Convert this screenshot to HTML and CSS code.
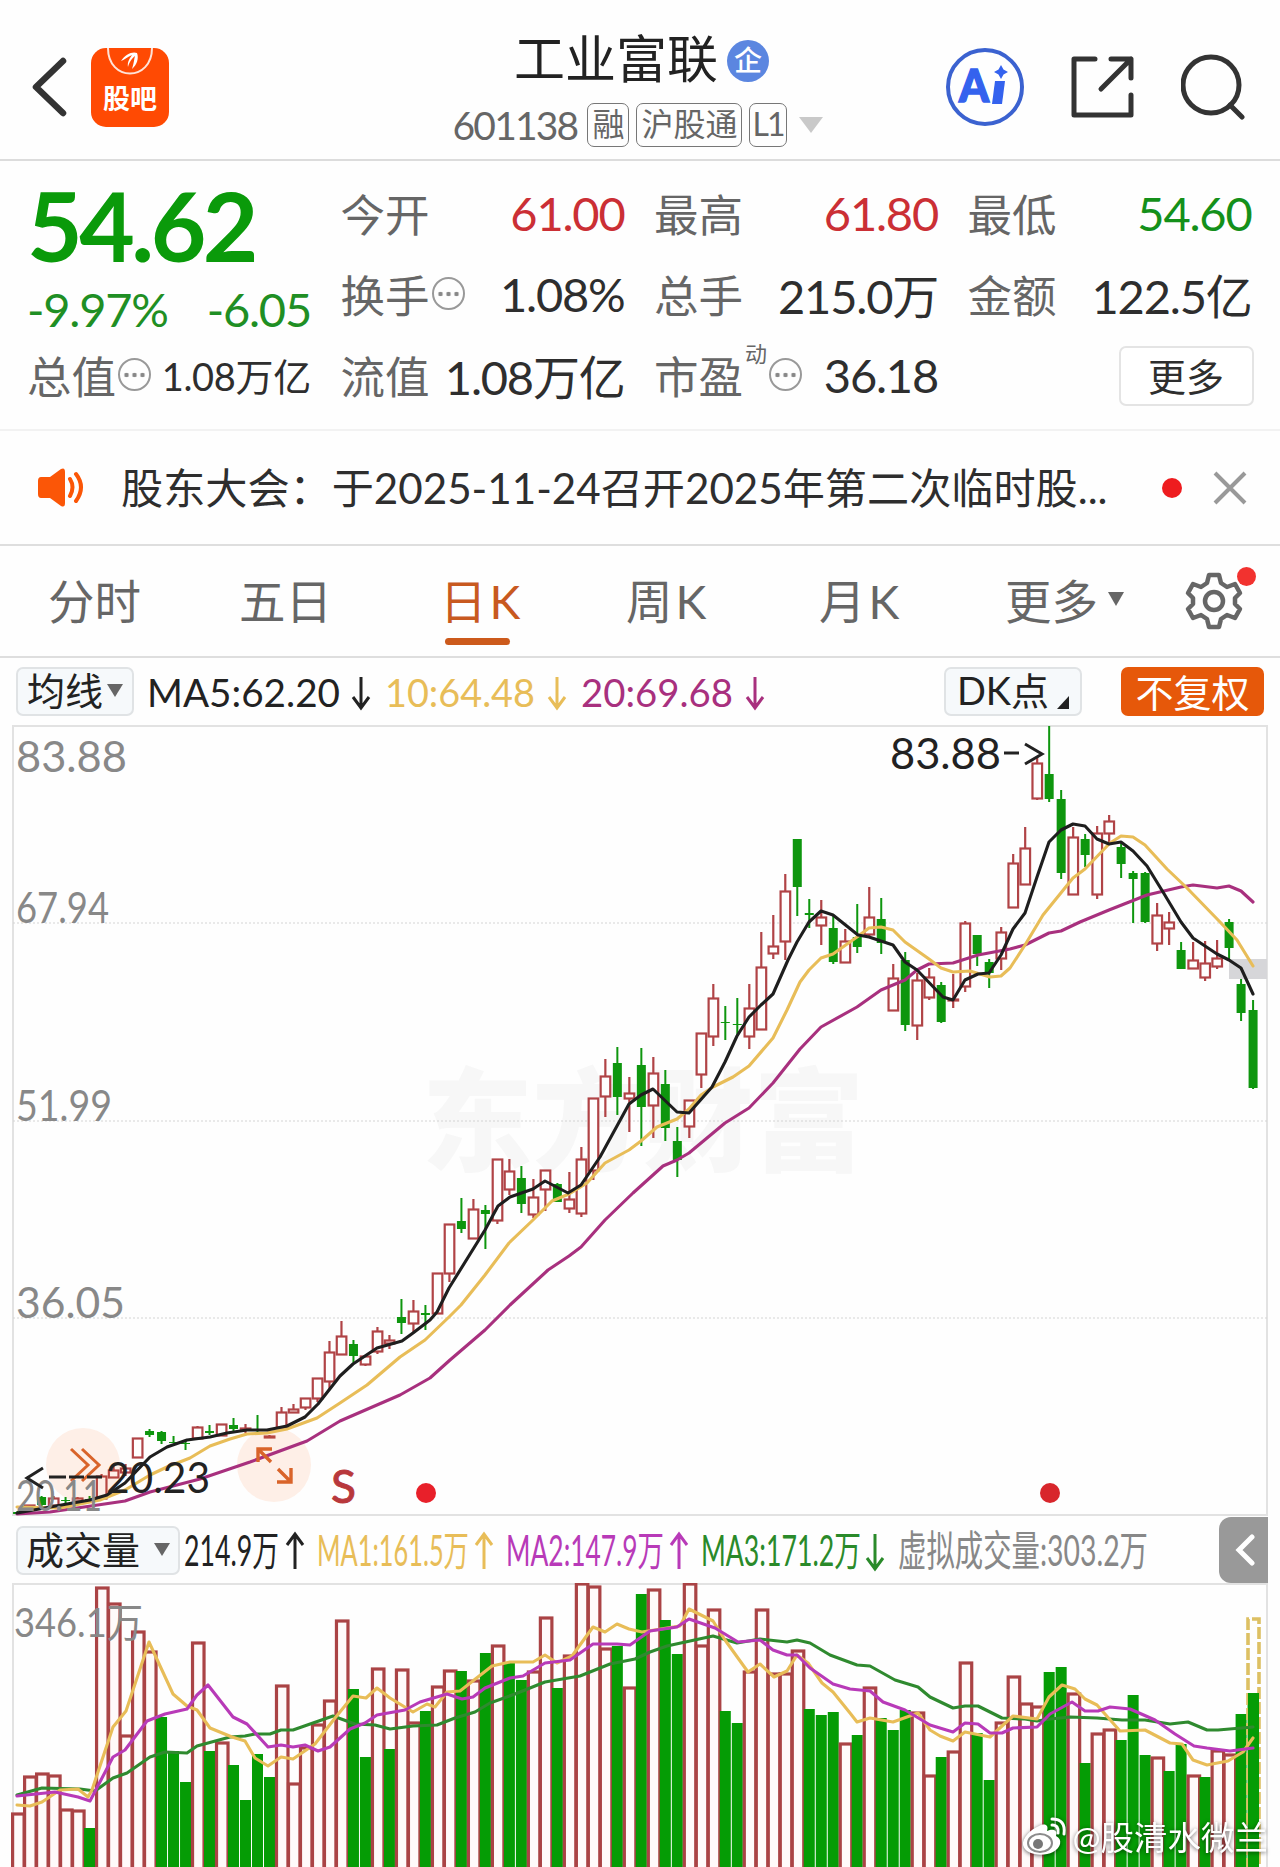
FILE: index.html
```html
<!DOCTYPE html>
<html lang="zh-CN">
<head>
    <meta charset="UTF-8">
    <meta name="viewport" content="width=device-width, initial-scale=1.0">
    <title>工业富联 601138</title>
    <link rel="stylesheet" href="styles.css">
</head>
<body>
    <header class="header">
        <div class="header-left">
            <svg class="back" width="36" height="60" viewBox="0 0 36 60"><path d="M32 4 L5 30 L32 56" fill="none" stroke="#333" stroke-width="6.5" stroke-linecap="round" stroke-linejoin="round"/></svg>
            <div class="app-icon">
                <svg width="78" height="33" viewBox="0 0 78 33">
                    <path d="M17 0 C17 34 61 34 61 0" fill="none" stroke="#ffe3d8" stroke-width="2"/>
                    <path d="M30 13 C34 6 42 3 46 5 C48 10 46 17 41 21 C43 15 43 11 44 8 C39 12 38 16 37 19 C36 14 39 10 41 7 C36 9 33 12 30 13Z" fill="#fff"/>
                </svg>
                <span>股吧</span>
            </div>
        </div>
        <div class="header-title">
            <div class="name">工业富联<span class="badge">企</span></div>
            <div class="code">
                <span class="num">601138</span>
                <span class="tag">融</span>
                <span class="tag">沪股通</span>
                <span class="tag level">L1</span>
                <svg width="24" height="16" viewBox="0 0 24 16"><path d="M0 0H24L12 16Z" fill="#c9c9c9"/></svg>
            </div>
        </div>
        <div class="header-right">
            <svg width="80" height="80" viewBox="0 0 80 80">
                <circle cx="40" cy="40" r="37" fill="none" stroke="#3b62d0" stroke-width="4"/>
                <text class="ai-text" x="14" y="55" textLength="30" lengthAdjust="spacingAndGlyphs">A</text>
                <path d="M50 34H60L57 57H47Z" fill="#3462ee"/>
                <path d="M56 18 L58.500 22.500 L63 25 L58.500 27.500 L56 32 L53.500 27.500 L49 25 L53.500 22.500Z" fill="#3462ee"/>
            </svg>
            <svg width="64" height="64" viewBox="0 0 64 64" fill="none" stroke="#333" stroke-width="5" stroke-linecap="round" stroke-linejoin="round">
                <path d="M24 4H3V60H60V40"/><path d="M40 4H60V23M60 4L30 34"/>
            </svg>
            <svg width="66" height="66" viewBox="0 0 66 66" fill="none" stroke="#333" stroke-width="5" stroke-linecap="round">
                <circle cx="30" cy="31" r="28"/><path d="M49 51L61 63"/>
            </svg>
        </div>
    </header>

    <section class="quote">
        <div class="price-box">
            <div class="price">54.62</div>
            <div class="change"><span>-9.97%</span><span>-6.05</span></div>
        </div>
        <div class="cell"><label>今开</label><b class="red">61.00</b></div>
        <div class="cell"><label>最高</label><b class="red">61.80</b></div>
        <div class="cell"><label>最低</label><b class="green">54.60</b></div>
        <div class="cell"><label>换手</label><i class="info"></i><b>1.08%</b></div>
        <div class="cell"><label>总手</label><b>215.0万</b></div>
        <div class="cell"><label>金额</label><b>122.5亿</b></div>
        <div class="cell"><label>总值</label><i class="info"></i><b class="small">1.08万亿</b></div>
        <div class="cell"><label>流值</label><b>1.08万亿</b></div>
        <div class="cell"><label>市盈</label><sup>动</sup><i class="info"></i><b>36.18</b></div>
        <div class="cell"><button class="more">更多</button></div>
    </section>

    <section class="news">
        <svg width="50" height="42" viewBox="0 0 50 42">
            <path d="M4 10H13L24 2Q28 0 28 5V36Q28 41 24 39L13 31H4Q1 31 1 27V14Q1 10 4 10Z" fill="#fb5607"/>
            <path d="M33 12Q38 20 33 29M39 7Q49 20 39 34" fill="none" stroke="#fb5607" stroke-width="4" stroke-linecap="round"/>
        </svg>
        <p>股东大会：于2025-11-24召开2025年第二次临时股...</p>
        <span class="dot"></span>
        <svg width="34" height="34" viewBox="0 0 34 34"><path d="M2 2L32 32M32 2L2 32" stroke="#999" stroke-width="4"/></svg>
    </section>

    <nav class="tabs">
        <span>分时</span>
        <span>五日</span>
        <span class="k active">日K</span>
        <span class="k">周K</span>
        <span class="k">月K</span>
        <span class="tab-more">更多<i></i></span>
        <div class="settings">
            <svg width="58" height="58" viewBox="0 0 58 58" fill="none" stroke="#666" stroke-width="4.5" stroke-linejoin="round">
                <path d="M24 3H34L36 11L42 15L50 12L55 21L50 26V32L55 37L50 46L42 43L36 47L34 55H24L22 47L16 43L8 46L3 37L8 32V26L3 21L8 12L16 15L22 11Z"/>
                <circle cx="29" cy="29" r="9"/>
            </svg>
            <span class="dot"></span>
        </div>
    </nav>

    <section class="legend">
        <button class="pick ma-pick">均线<i></i></button>
        <svg class="legend-text" width="640" height="60" viewBox="140 662 640 60" id="maLegend"></svg>
        <button class="pick dk">DK点<i></i></button>
        <button class="adjust">不复权</button>
    </section>

    <svg class="chart" id="priceChart" width="1280" height="792" viewBox="0 725 1280 792"></svg>

    <section class="legend vol-legend">
        <button class="pick vol-pick">成交量<i></i></button>
        <svg class="legend-text" width="980" height="66" viewBox="180 1517 980 66" id="volLegend"></svg>
        <button class="collapse"><svg width="20" height="32" viewBox="0 0 20 32"><path d="M17 3L4 16L17 29" fill="none" stroke="#fff" stroke-width="5" stroke-linecap="round"/></svg></button>
    </section>

    <div class="volume">
        <svg class="chart" id="volChart" width="1280" height="284" viewBox="0 1583 1280 284"></svg>
        <div class="author">
            <svg width="46" height="40" viewBox="0 0 46 40">
                <path d="M18 9C24 6 28 8 26 14C33 11 37 14 35 19C42 22 40 31 32 35C22 40 4 38 2 28C1 21 10 12 18 9Z" fill="#fff"/>
                <ellipse cx="19" cy="26" rx="12" ry="9" fill="none" stroke="#8b8b8b" stroke-width="2"/>
                <circle cx="17" cy="27" r="5" fill="#777"/>
                <path d="M31 8Q38 8 37 16M31 2Q45 2 43 17" fill="none" stroke="#fff" stroke-width="3" stroke-linecap="round"/>
            </svg>
            <span>@股清水微兰</span>
        </div>
    </div>

    <script src="chart.js"></script>
</body>
</html>
```
FILE: styles.css
```css
* {
    box-sizing: border-box;
}
body {
    margin: 0;
    width: 1280px;
    height: 1867px;
    overflow: hidden;
    background: #fefefe;
    color: #2e2e2e;
    font-family: Lato, "Noto Sans CJK SC", sans-serif;
}
button {
    font-family: inherit;
    padding: 0;
    margin: 0;
    color: inherit;
}
svg {
    display: block;
    flex: none;
}

/* header */
.header {
    height: 161px;
    border-bottom: 2px solid #dcdcdc;
    display: grid;
    grid-template-columns: 400px 1fr 400px;
}
.header-left {
    display: flex;
    align-items: center;
    padding: 15px 0 0 31px;
    gap: 24px;
}
.app-icon {
    width: 78px;
    height: 79px;
    border-radius: 15px;
    background: #ff4a03;
    color: #fff;
    text-align: center;
    font-size: 27px;
    font-weight: 700;
    line-height: 36px;
}
.header-title {
    display: flex;
    flex-direction: column;
    align-items: center;
    padding-top: 31px;
}
.name {
    display: flex;
    align-items: center;
    height: 60px;
    margin-left: 3px;
    font-size: 51px;
    line-height: 54px;
    padding-bottom: 4px;
    color: #222;
}
.badge {
    width: 42px;
    height: 42px;
    margin: 4px 0 0 9px;
    border-radius: 50%;
    background: #5b86e0;
    color: #fff;
    font-size: 28px;
    font-weight: 500;
    line-height: 40px;
    text-align: center;
}
.code {
    display: flex;
    align-items: center;
    gap: 7px;
    height: 44px;
    margin-top: 12px;
    margin-left: -4px;
    color: #666;
    font-size: 39px;
}
.code .num {
    letter-spacing: -1.8px;
    margin-right: 3px;
}
.code svg {
    margin-left: 5px;
}
.tag {
    height: 44px;
    padding: 0 4px;
    border: 1.5px solid #777;
    border-radius: 7px;
    font-size: 32px;
    line-height: 40px;
}
.tag.level {
    padding: 0 3px 0 2px;
    letter-spacing: -2px;
}
.header-right {
    display: flex;
    align-items: center;
    padding: 15px 0 0 65px;
    gap: 46px;
}
.ai-text {
    font-family: Lato, sans-serif;
    font-weight: 900;
    font-size: 46px;
    fill: #3462ee;
    stroke: #3462ee;
    stroke-width: 1.5;
}

/* quote numbers */
.quote {
    display: grid;
    grid-template-columns: 284px 284px 284px 284px;
    grid-template-rows: 81px 81px 81px;
    column-gap: 29.5px;
    height: 270px;
    padding: 11px 0 0 27px;
    border-bottom: 2px solid #f2f2f2;
}
.price-box {
    grid-row: 1 / 3;
    color: #0a9a0a;
}
.price {
    height: 101px;
    font-size: 96px;
    font-weight: 700;
    line-height: 106px;
    letter-spacing: -3.5px;
}
.change {
    display: flex;
    justify-content: space-between;
    font-size: 47px;
    line-height: 72px;
    letter-spacing: -1.2px;
    color: #1f8f24;
}
.cell {
    display: flex;
    align-items: center;
}
.cell label {
    font-size: 44.5px;
    color: #666;
}
.cell b {
    margin-left: auto;
    font-size: 47px;
    font-weight: 400;
    letter-spacing: -1.2px;
    white-space: nowrap;
}
.cell b.small {
    font-size: 38px;
    letter-spacing: -0.3px;
}
.cell sup {
    font-size: 22px;
    color: #666;
    align-self: flex-start;
    margin: 3px 0 0 2px;
    line-height: 34px;
}
.red {
    color: #cb2f35;
}
.green {
    color: #14901a;
}
.info {
    width: 33px;
    height: 33px;
    margin: 0 0 0 2px;
    border: 2.5px solid #999;
    border-radius: 50%;
    background: radial-gradient(circle, #888 2px, transparent 2.6px) center / 8px 8px repeat-x;
    background-clip: content-box;
    padding: 0 2px;
    flex: none;
}
.more {
    width: 135px;
    height: 60px;
    margin: 2px -2px 0 auto;
    border: 2px solid #e4e4e4;
    border-radius: 7px;
    background: #fff;
    font-size: 38px;
    line-height: 48px;
}

/* news */
.news {
    display: flex;
    align-items: center;
    height: 115px;
    padding: 0 33px 0 37px;
    border-bottom: 2px solid #dedede;
}
.news p {
    margin: -5px auto 0 34px;
    font-size: 42.15px;
    white-space: nowrap;
}
.dot {
    width: 20px;
    height: 20px;
    border-radius: 50%;
    background: #ee1c1f;
}
.news svg:last-child {
    margin-left: 31px;
}

/* tabs */
.tabs {
    display: grid;
    grid-template-columns: 191px 201px 186px 193px 186px 180px auto;
    align-items: center;
    justify-items: start;
    height: 112px;
    padding-left: 48px;
    border-bottom: 2px solid #dedede;
    font-size: 46.5px;
    color: #666;
}
.tabs > span {
    margin-top: -5px;
}
.tabs .k {
    letter-spacing: 3px;
}
.tabs .active {
    position: relative;
    color: #c8591f;
}
.active::after {
    content: "";
    position: absolute;
    left: 5px;
    bottom: -13px;
    width: 65px;
    height: 7px;
    border-radius: 4px;
    background: #cc5a1c;
}
.tab-more {
    display: flex;
    align-items: center;
}
.tab-more i {
    margin-left: 10px;
    border: 8px solid transparent;
    border-top: 14px solid #666;
    border-bottom: 0;
}
.settings {
    position: relative;
}
.settings .dot {
    position: absolute;
    right: -13px;
    top: -5px;
    width: 19px;
    height: 19px;
    background: #f2322f;
}

/* legends */
.legend {
    display: flex;
    align-items: center;
    height: 67px;
    padding-left: 16px;
}
.pick {
    display: flex;
    align-items: center;
    justify-content: center;
    height: 49px;
    padding-bottom: 2px;
    border: 2px solid #e0e3e5;
    border-radius: 7px;
    background: #f6f9fb;
    font-size: 38px;
    line-height: 43px;
    color: #222;
}
.pick i {
    margin-left: 4px;
    border: 8px solid transparent;
    border-top: 13px solid #666;
    border-bottom: 0;
}
.ma-pick {
    width: 118px;
}
.dk {
    width: 138px;
    margin-left: 164px;
}
.legend .legend-text {
    margin-left: 6px;
}
.dk i {
    margin: 24px 0 0 8px;
    border: 0 solid transparent;
    border-left: 12px solid transparent;
    border-bottom: 13px solid #222;
}
.adjust {
    width: 143px;
    height: 49px;
    margin-left: 39px;
    border: 0;
    border-radius: 7px;
    background: #e6580a;
    color: #fff;
    font-size: 38px;
    line-height: 44px;
}
.vol-legend {
    height: 66px;
}
.vol-pick {
    width: 164px;
}
.vol-pick i {
    margin-left: 14px;
}
.vol-legend .legend-text {
    margin-left: 0;
}
.collapse {
    display: flex;
    align-items: center;
    width: 49px;
    height: 66px;
    margin-left: auto;
    margin-right: 12px;
    padding-left: 16px;
    border: 0;
    border-radius: 12px 0 0 12px;
    background: #999;
}

/* charts */
.chart text {
    white-space: pre;
}
.frame {
    fill: none;
    stroke: #e2e2e2;
    stroke-width: 2;
}
.grid {
    stroke: #d4d4d4;
    stroke-width: 1.2;
    stroke-dasharray: 2 2;
}
.line {
    fill: none;
    stroke-width: 3.1;
    stroke-linejoin: round;
    stroke-linecap: round;
}
.up {
    fill: #fefefe;
    stroke: #b04346;
    stroke-width: 2.2;
}
.down {
    fill: #0e960e;
}
.vol-up {
    fill: #fffafa;
    stroke: #aa4345;
    stroke-width: 3.2;
}
.vol-down {
    fill: #059c05;
}
.brand {
    font-family: "Noto Sans CJK SC", sans-serif;
    font-weight: 900;
}
.volume {
    position: relative;
}
.author {
    position: absolute;
    right: 12px;
    bottom: 7px;
    display: flex;
    align-items: center;
    gap: 5px;
    color: #fff;
    font-size: 33.5px;
    line-height: 46px;
    white-space: nowrap;
    filter: drop-shadow(0 1px 2px rgba(0, 0, 0, 0.6));
}
```
FILE: chart.js
```js
const X0 = 17.6;
const STEP = 11.995;
const YELLOW = '#e8bd58';
const PURPLE = '#a8307e';

// [direction, high, body top, body bottom, low]
const candles = [
    ['d',1511,1512,1514,1515],['u',1505,1505,1507,1507],['d',1496,1497,1505,1510],['u',1496,1498,1505,1506],
    ['d',1497,1500,1501,1503],['u',1497,1498,1501,1504],['d',1496,1499,1500,1502],['u',1474,1476,1498,1498],
    ['u',1465,1470,1477,1477],['u',1464,1468,1472,1476],['u',1438,1438,1457,1457],['d',1429,1431,1435,1437],
    ['d',1431,1432,1441,1444],['d',1436,1442,1443,1443],['d',1441,1443,1444,1450],['u',1426,1427,1438,1438],
    ['d',1425,1431,1433,1435],['u',1424,1424,1435,1435],['d',1418,1425,1429,1431],['u',1424,1428,1429,1433],
    ['d',1415,1430,1431,1432],['u',1435,1436,1437,1438],['u',1407,1412,1427,1427],['u',1404,1409,1412,1413],
    ['u',1398,1398,1407,1410],['u',1378,1378,1398,1402],['u',1341,1352,1381,1390],['u',1321,1336,1354,1354],
    ['d',1340,1344,1356,1363],['u',1356,1356,1364,1366],['u',1327,1331,1351,1354],['u',1335,1340,1343,1349],
    ['d',1299,1317,1323,1334],['u',1300,1311,1323,1332],['d',1305,1313,1315,1330],['u',1273,1273,1313,1313],
    ['u',1224,1224,1273,1282],['d',1198,1221,1229,1233],['u',1199,1209,1238,1238],['d',1205,1210,1214,1249],
    ['u',1159,1159,1220,1224],['u',1159,1171,1189,1195],['d',1166,1178,1204,1213],['u',1179,1197,1214,1218],
    ['u',1170,1170,1189,1211],['d',1183,1184,1202,1202],['u',1172,1199,1208,1213],['u',1147,1159,1213,1217],
    ['u',1098,1098,1170,1180],['u',1059,1076,1096,1117],['d',1047,1063,1097,1115],['u',1077,1093,1098,1132],
    ['d',1048,1065,1107,1146],['u',1057,1073,1105,1138],['d',1070,1084,1128,1141],['d',1127,1141,1160,1177],
    ['u',1100,1100,1126,1138],['u',1033,1033,1074,1088],['u',984,998,1036,1046],['d',1006,1022,1023,1040],
    ['d',998,1024,1025,1035],['u',984,1008,1036,1049],['u',932,967,1029,1029],['u',915,946,953,959],
    ['u',874,891,941,960],['d',839,839,887,916],['d',899,913,915,928],['u',900,917,925,945],
    ['d',915,928,962,964],['u',929,941,962,962],['d',904,937,947,953],['u',887,917,934,936],
    ['d',898,919,943,954],['u',964,978,1010,1010],['d',952,960,1025,1031],['u',973,980,1025,1040],
    ['u',968,977,997,1000],['d',982,985,1022,1023],['u',974,999,1000,1008],['u',921,923,986,992],
    ['d',935,935,954,966],['d',959,962,973,988],['u',927,932,958,970],['u',854,863,907,907],
    ['u',827,848,884,884],['u',757,763,798,800],['d',726,774,799,802],['d',790,799,873,879],
    ['u',827,837,894,895],['d',834,839,855,867],['u',826,833,894,899],['u',815,821,833,845],
    ['d',842,847,864,878],['d',871,873,879,923],['d',872,873,922,923],['u',903,915,943,951],
    ['u',912,922,928,945],['d',942,950,969,969],['u',942,960,968,968],['u',941,963,977,981],
    ['u',940,958,966,969],['d',919,922,948,960],['d',979,984,1013,1021],['d',1000,1010,1088,1089]
];

const ma5 = '17,1513 67,1504 90,1500 107,1495 125,1483 150,1457 167,1447 187,1440 210,1437 227,1433 247,1430 267,1430 287,1426 305,1417 318,1404 340,1376 353,1364 377,1348 402,1341 413,1333 430,1320 437,1312 449,1288 485,1230 498,1206 510,1197 533,1189 545,1181 568,1193 581,1185 600,1157 629,1104 641,1095 653,1089 677,1112 689,1113 712,1087 725,1062 737,1036 749,1017 761,1005 773,994 788,960 797,942 809,922 821,911 833,915 858,935 869,937 893,945 905,962 917,970 943,997 953,1000 965,980 978,974 989,973 1001,955 1013,929 1025,913 1037,877 1049,842 1061,830 1073,824 1085,826 1097,839 1109,844 1121,842 1133,851 1147,866 1163,892 1181,922 1193,938 1217,954 1229,960 1241,968 1253,994';
const ma10 = '17,1507 60,1508 80,1504 100,1500 125,1490 150,1475 167,1467 190,1458 210,1446 230,1439 247,1434 267,1433 287,1429 317,1418 340,1403 367,1385 400,1357 425,1340 449,1317 461,1305 485,1275 509,1243 533,1220 552,1201 569,1194 587,1183 605,1163 629,1150 641,1141 657,1127 677,1119 689,1109 701,1095 713,1087 733,1077 749,1066 773,1038 787,1010 800,982 809,970 821,958 833,954 857,937 869,928 881,927 893,930 905,942 929,959 941,968 953,972 970,971 990,977 1001,976 1010,968 1025,945 1043,915 1073,878 1085,869 1110,843 1121,836 1133,837 1145,845 1167,869 1187,888 1220,922 1237,940 1253,966';
const ma20 = '17,1514 50,1512 125,1501 150,1492 200,1479 250,1462 307,1441 340,1421 400,1395 430,1378 450,1360 485,1330 510,1305 548,1270 569,1256 581,1247 605,1220 633,1193 663,1166 677,1160 689,1153 725,1123 749,1108 773,1083 800,1049 821,1027 857,1007 881,990 905,980 917,970 929,964 953,963 978,955 1010,949 1025,945 1049,933 1061,931 1080,922 1109,910 1147,895 1181,887 1193,885 1217,888 1229,886 1241,891 1253,902';

// top edge of every volume bar
const volumes = [
    1813,1776,1773,1775,1809,1810,1828,1587,1603,1735,1631,1651,1717,1751,1782,1642,1751,1742,1765,1800,
    1754,1777,1685,1783,1747,1724,1700,1620,1689,1757,1668,1749,1669,1722,1711,1686,1670,1671,1680,1653,
    1645,1663,1680,1671,1617,1688,1655,1583,1586,1648,1646,1687,1594,1589,1620,1654,1583,1645,1609,1711,
    1723,1671,1609,1673,1673,1650,1709,1715,1712,1743,1735,1687,1718,1730,1710,1712,1775,1757,1751,1662,
    1733,1780,1722,1676,1703,1706,1672,1667,1693,1763,1733,1729,1740,1695,1755,1757,1771,1744,1775,1777,
    1750,1754,1714,1693
];
const volDown = [6,12,13,14,16,18,19,20,21,28,29,31,34,37,39,41,42,45,50,52,54,55,59,60,66,67,68,70,72,73,74,77,80,81,86,87,89,92,93,94,96,97,99,102,103];

const vma1 = '17,1805 30,1806 42,1802 60,1790 78,1789 88,1797 92,1790 100,1766 113,1727 126,1711 149,1642 173,1694 187,1706 197,1710 210,1728 232,1737 245,1741 255,1758 268,1766 281,1757 293,1759 315,1744 335,1718 353,1696 366,1698 377,1688 390,1698 413,1712 427,1704 435,1707 447,1692 460,1691 492,1666 510,1662 533,1662 545,1655 557,1663 572,1656 593,1627 605,1632 617,1624 629,1629 642,1632 667,1628 680,1626 689,1609 713,1621 725,1640 748,1672 760,1664 774,1677 787,1671 797,1655 808,1663 822,1683 833,1692 850,1713 857,1722 870,1718 893,1722 918,1713 930,1730 940,1736 953,1741 965,1732 990,1737 1013,1716 1037,1719 1049,1697 1062,1685 1075,1689 1085,1699 1097,1705 1120,1731 1145,1730 1170,1743 1182,1744 1193,1760 1207,1765 1228,1761 1243,1752 1253,1738';
const vma2 = '17,1796 55,1792 78,1797 90,1801 113,1757 125,1750 147,1721 165,1714 187,1709 197,1695 208,1685 233,1717 247,1724 268,1747 281,1745 293,1747 305,1745 318,1751 330,1747 350,1729 365,1723 377,1715 405,1710 420,1702 447,1694 462,1699 473,1697 485,1688 510,1678 523,1676 545,1663 570,1660 593,1644 617,1644 630,1645 650,1631 677,1627 689,1619 715,1628 738,1642 760,1640 773,1650 787,1655 797,1655 810,1668 833,1684 850,1689 870,1691 883,1702 905,1710 930,1725 953,1732 965,1723 978,1724 990,1733 1002,1733 1013,1728 1037,1727 1050,1714 1072,1702 1085,1711 1098,1711 1110,1707 1130,1709 1155,1720 1175,1734 1194,1746 1207,1748 1230,1751 1253,1748';
const vma3 = '17,1795 42,1788 80,1789 95,1791 113,1778 127,1773 150,1757 165,1752 187,1753 197,1746 230,1737 245,1736 255,1734 270,1734 281,1730 293,1730 313,1723 333,1716 355,1724 375,1725 390,1729 413,1726 437,1725 455,1718 475,1712 490,1703 515,1694 545,1682 580,1676 610,1664 635,1659 650,1652 667,1646 690,1641 713,1636 737,1643 760,1639 787,1642 797,1640 810,1643 830,1655 857,1665 870,1666 895,1680 918,1687 930,1697 953,1708 965,1706 978,1706 1002,1718 1025,1719 1037,1721 1050,1719 1070,1717 1097,1718 1122,1720 1145,1720 1170,1724 1188,1722 1207,1730 1218,1730 1253,1727';

// text squeezed into a given width
function text(str, x, y, width, size, fill) {
    return `<text x="${x}" y="${y}" font-size="${size}" textLength="${width}" lengthAdjust="spacingAndGlyphs" fill="${fill}">${str}</text>`;
}

function arrow(x, top, bottom, up, color) {
    const tip = up ? top : bottom;
    const back = up ? top + 11 : bottom - 11;
    return `<path d="M${x} ${top}V${bottom}M${x - 8} ${back}L${x} ${tip}L${x + 8} ${back}" fill="none" stroke="${color}" stroke-width="3"/>`;
}

function line(points, color) {
    return `<polyline class="line" points="${points}" stroke="${color}"/>`;
}

function drawPrice() {
    let s = text('东方财富', 422, 1163, 442, 112, '#f7f7f7').replace('<text', '<text class="brand"');
    s += '<rect class="frame" x="13" y="726" width="1254" height="789"/>';
    [923, 1121, 1318].forEach(y => { s += `<line class="grid" x1="13" x2="1267" y1="${y}" y2="${y}"/>`; });
    s += '<rect x="1229" y="959" width="38" height="20" fill="#d6d6d9"/>';

    candles.forEach(([dir, high, top, bottom, low], i) => {
        const x = X0 + i * STEP;
        if (dir === 'u') {
            s += `<path class="up" d="M${x} ${high}V${top}M${x} ${bottom}V${low}"/>`;
            s += `<rect class="up" x="${x - 4.7}" y="${top + 0.5}" width="9.6" height="${bottom - top}"/>`;
        } else {
            s += `<rect class="down" x="${x - 1}" y="${high}" width="2" height="${low - high}"/>`;
            s += `<rect class="down" x="${x - 4.5}" y="${top}" width="9" height="${bottom - top}"/>`;
        }
    });

    s += '<circle cx="83" cy="1465" r="37" fill="#ff6a20" fill-opacity=".1"/><circle cx="274" cy="1465" r="37" fill="#ff6a20" fill-opacity=".1"/>';
    s += line(ma20, PURPLE) + line(ma10, YELLOW) + line(ma5, '#1e1e1e');
    s += '<path d="M71 1449L88 1465L71 1481M82 1449L99 1465L82 1481" fill="none" stroke="#d9642a" stroke-width="3"/>';
    s += '<path d="M258 1462V1449H272M258 1449L271 1462M291 1468V1482H277M291 1482L278 1469" fill="none" stroke="#d9642a" stroke-width="3.4"/>';

    [['83.88', 772, 111], ['67.94', 923, 93], ['51.99', 1121, 96], ['36.05', 1318, 109], ['20.11', 1511, 86]].forEach(([t, y, w]) => {
        s += text(t, 16, y, w, 43, '#888');
    });
    s += text('83.88', 890, 769, 111, 42, '#222');
    s += '<path d="M1004 753H1019M1025 744L1042 754L1025 764" fill="none" stroke="#222" stroke-width="3"/>';
    s += text('20.23', 106, 1493, 104, 43, '#222');
    s += '<path d="M43 1468L27 1478L43 1488M49 1477H66M69 1477H84M87 1477H102" fill="none" stroke="#222" stroke-width="3"/>';
    s += text('S', 331, 1503, 25, 46, '#b8383c').replace('<text', '<text stroke="#b8383c"');
    s += '<circle cx="426" cy="1493" r="10" fill="#e8202a"/><circle cx="1050" cy="1493" r="10" fill="#d8262c"/>';
    document.getElementById('priceChart').innerHTML = s;
}

function drawVolume() {
    let s = '<path class="frame" d="M13 1867V1584H1267V1867"/>';
    volumes.forEach((top, i) => {
        const x = X0 + i * STEP;
        if (volDown.includes(i)) {
            s += `<rect class="vol-down" x="${x - 5.5}" y="${top}" width="11" height="${1870 - top}"/>`;
        } else {
            s += `<rect class="vol-up" x="${x - 5}" y="${top + 1}" width="11.5" height="${1875 - top}"/>`;
        }
    });
    s += '<path d="M1248 1870V1619H1259V1870" fill="none" stroke="#ddc063" stroke-width="3.6" stroke-dasharray="12 3"/>';
    s += `<rect class="vol-down" x="1248" y="1693" width="11" height="180"/>`;
    s += line(vma3, '#2f8a2f') + line(vma1, YELLOW) + line(vma2, '#b83ab8');
    s += text('346.1万', 14, 1637, 129, 40, '#888');
    document.getElementById('volChart').innerHTML = s;
}

function drawLegends() {
    document.getElementById('maLegend').innerHTML =
        text('MA5:62.20', 147, 707, 193, 39, '#222') + arrow(361, 677, 708, false, '#222') +
        text('10:64.48', 385, 707, 150, 39, YELLOW) + arrow(557, 677, 708, false, YELLOW) +
        text('20:69.68', 581, 707, 152, 39, PURPLE) + arrow(755, 677, 708, false, PURPLE);

    document.getElementById('volLegend').innerHTML =
        text('214.9万', 184, 1566, 95, 42, '#222') + arrow(295, 1534, 1569, true, '#222') +
        text('MA1:161.5万', 317, 1566, 152, 42, YELLOW) + arrow(484, 1534, 1569, true, YELLOW) +
        text('MA2:147.9万', 506, 1566, 158, 42, '#b83ab8') + arrow(679, 1534, 1569, true, '#b83ab8') +
        text('MA3:171.2万', 701, 1566, 160, 42, '#2a8a2a') + arrow(875, 1534, 1569, false, '#2a8a2a') +
        text('虚拟成交量:303.2万', 898, 1566, 250, 42, '#888');
}

drawPrice();
drawVolume();
drawLegends();
```
